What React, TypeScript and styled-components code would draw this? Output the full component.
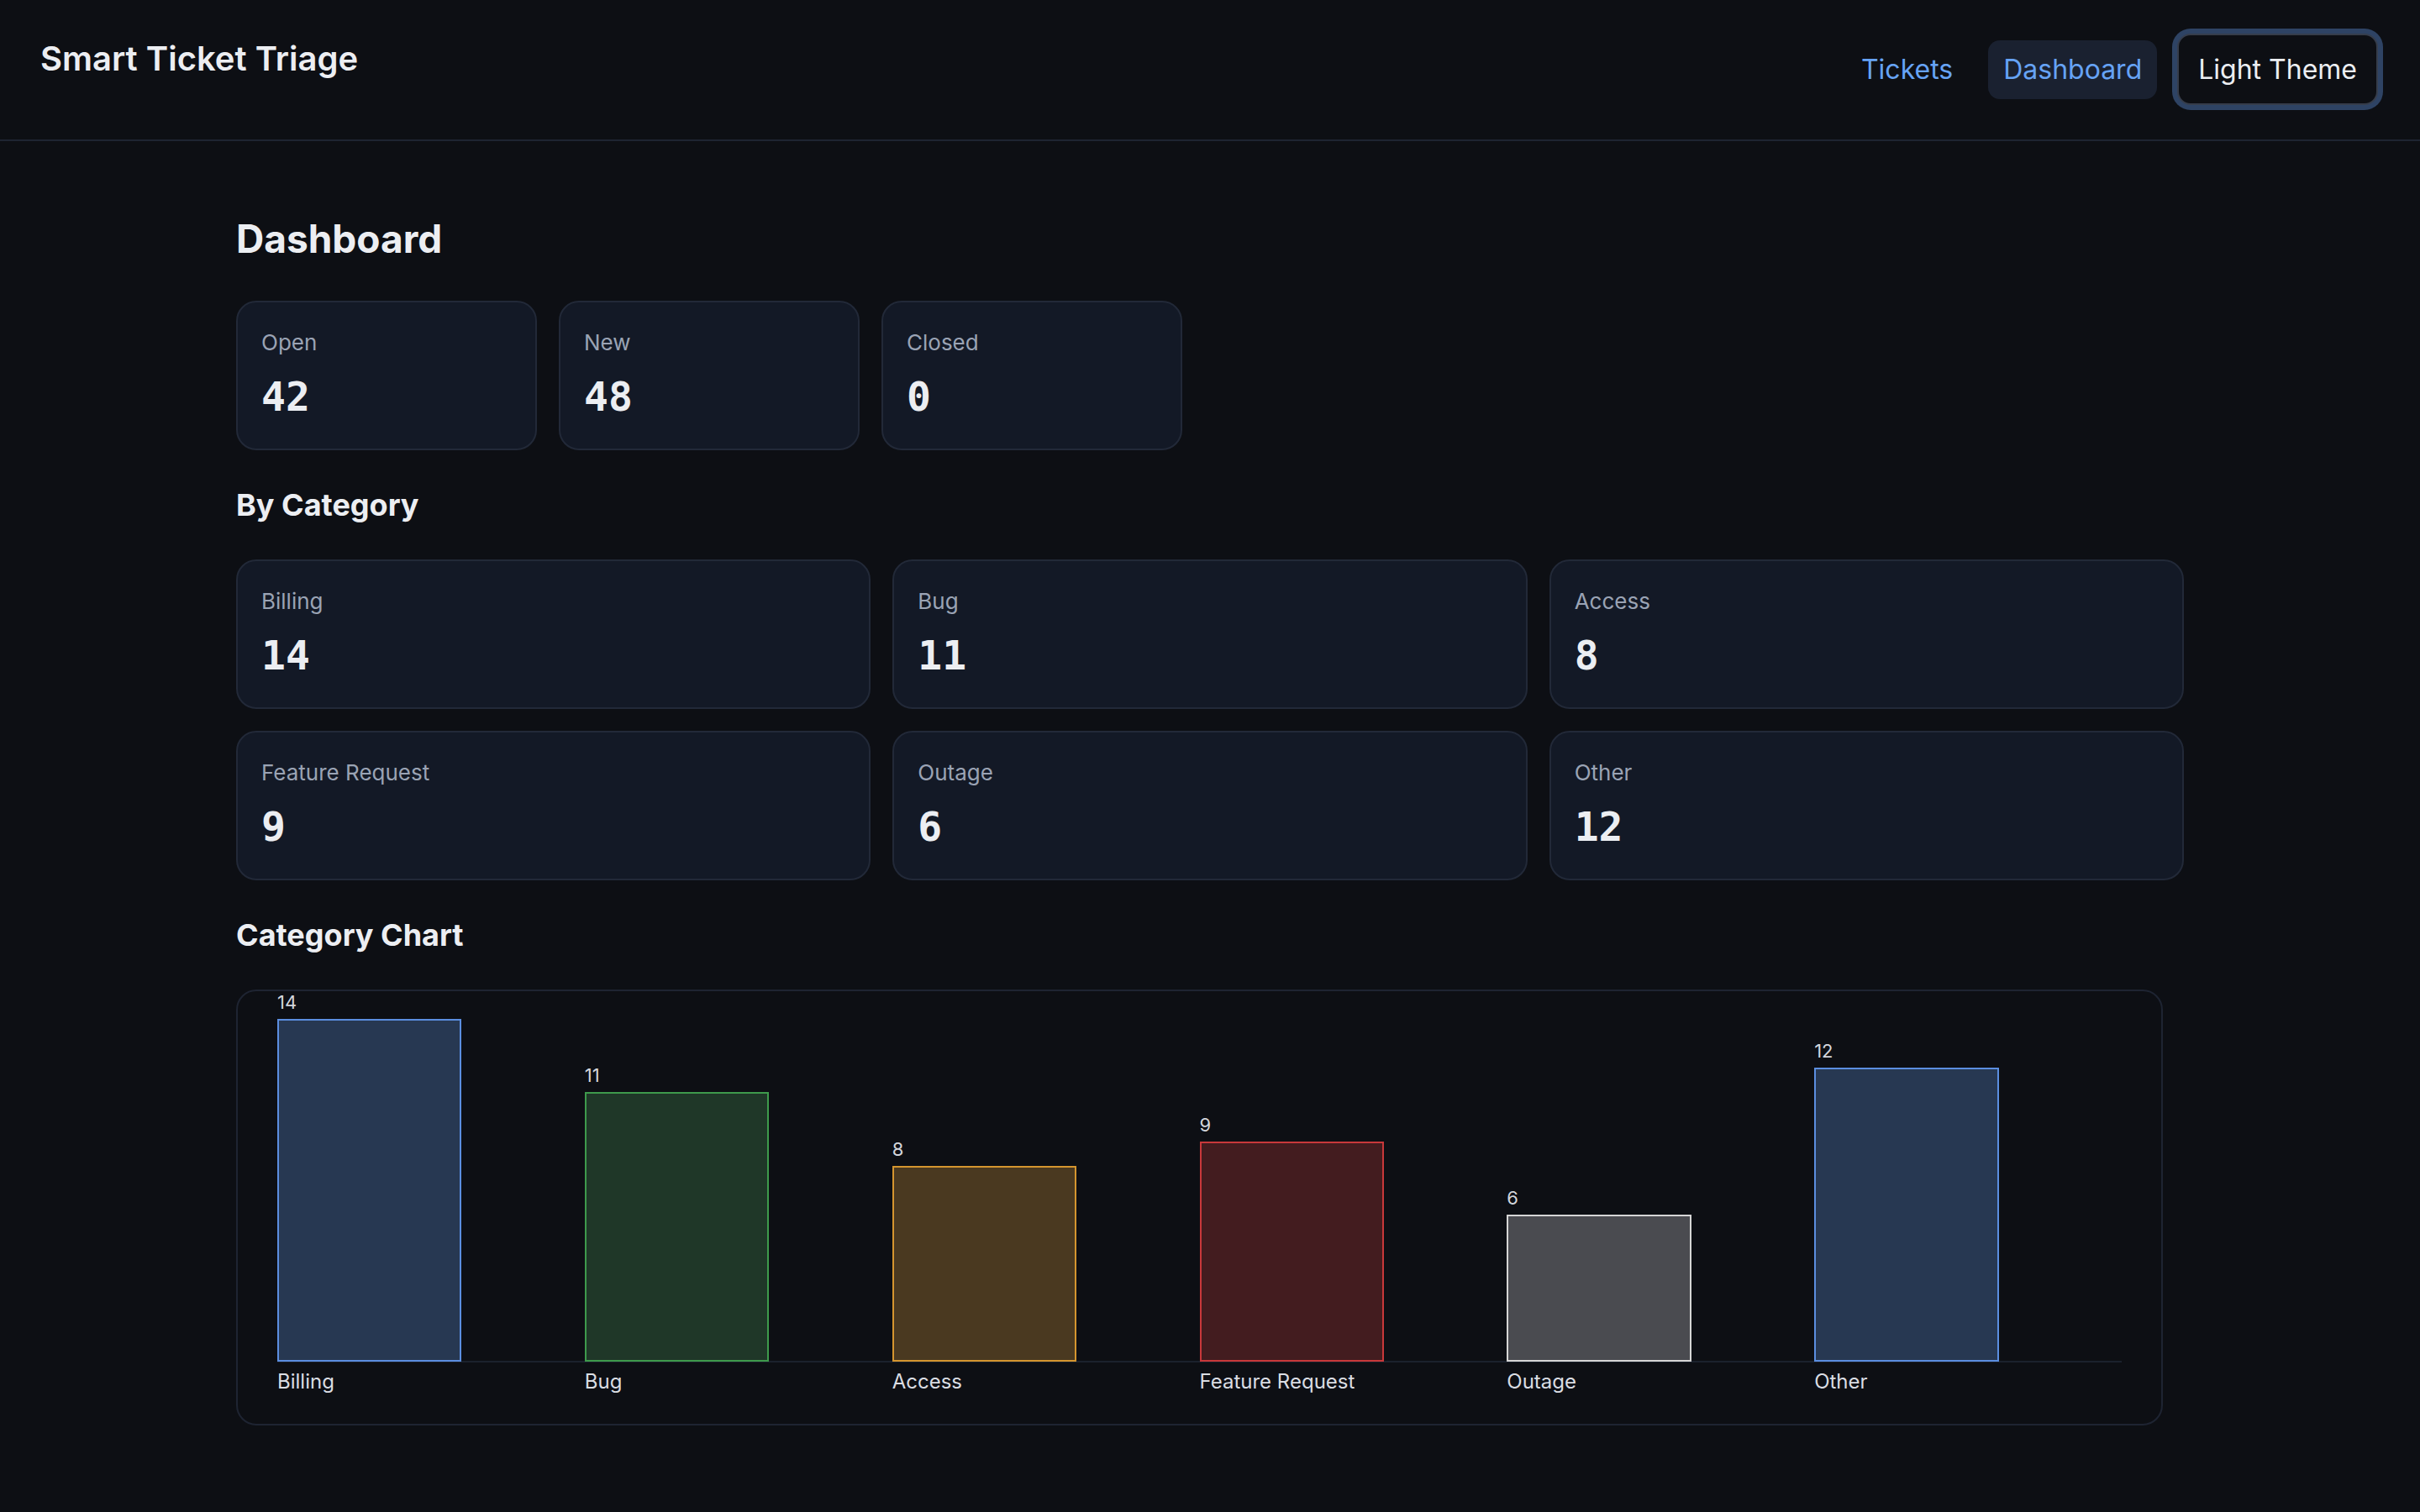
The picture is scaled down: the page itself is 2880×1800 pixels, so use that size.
import React from "react"
import styled, { createGlobalStyle } from "styled-components"

const GlobalStyle = createGlobalStyle`
  * {
    box-sizing: border-box;
  }
  body {
    margin: 0;
    background: #0d0f14;
    color: #e5e7eb;
    font-family: Inter, "Noto Sans", "Liberation Sans", sans-serif;
  }
`

const Header = styled.header`
  height: 168px;
  display: flex;
  justify-content: space-between;
  align-items: flex-start;
  padding: 40px 48px 0;
  border-bottom: 2px solid #1e2432;
`

const Brand = styled.h1`
  margin: 6px 0 0;
  font-size: 40px;
  line-height: 48px;
  font-weight: 600;
  color: #eceef2;
`

const Nav = styled.nav`
  display: flex;
  align-items: center;
  gap: 24px;
  height: 85px;
`

const NavLink = styled.a<{ $active?: boolean }>`
  display: block;
  padding: 16px 18px;
  font-size: 32px;
  line-height: 38px;
  color: #66a3f5;
  text-decoration: none;
  border-radius: 14px;
  background: ${(p) => (p.$active ? "#1a2130" : "transparent")};
`

const ThemeButton = styled.button`
  height: 85px;
  padding: 0 23px;
  font-family: inherit;
  font-size: 32px;
  color: #eceef2;
  background: #0d0f14;
  border: 2px solid #363d4b;
  border-radius: 16px;
  box-shadow: 0 0 0 6px #2e4364;
  margin-right: 2px;
`

const Main = styled.main`
  max-width: 2400px;
  margin: 0 auto;
  padding: 88px 41px 60px;
`

const PageTitle = styled.h2`
  margin: 0 0 46px;
  font-size: 46px;
  line-height: 56px;
  font-weight: 700;
  color: #eceef2;
`

const SectionTitle = styled.h3`
  margin: 43px 0;
  font-size: 36px;
  line-height: 44px;
  font-weight: 700;
  color: #eceef2;
`

const StatRow = styled.div`
  display: grid;
  grid-template-columns: repeat(3, 358px);
  gap: 26px;
`

const CategoryGrid = styled.div`
  display: grid;
  grid-template-columns: repeat(3, 1fr);
  gap: 26px;
`

const Card = styled.div`
  height: 178px;
  padding: 32px 28px 34px;
  background: #131926;
  border: 2px solid #222938;
  border-radius: 24px;
`

const CardLabel = styled.div`
  font-size: 26px;
  line-height: 32px;
  color: #9aa3b4;
`

const CardValue = styled.div`
  margin-top: 20px;
  font-family: "DejaVu Sans Mono", "Liberation Mono", monospace;
  font-weight: 700;
  font-size: 48px;
  line-height: 56px;
  color: #eceef2;
`

const ChartPanel = styled.div`
  margin-right: 25px;
  padding: 0 47px 36px;
  border: 2px solid #1e2432;
  border-radius: 24px;
`

const BarsRow = styled.div`
  display: grid;
  grid-template-columns: repeat(6, 1fr);
  align-items: end;
  height: 442px;
  border-bottom: 2px solid #1b212d;
`

const BarColumn = styled.div`
  display: flex;
  flex-direction: column;
  justify-content: flex-end;
`

const BarValue = styled.div`
  font-size: 22px;
  line-height: 27px;
  margin-bottom: 6px;
  color: #d3d6dc;
`

const Bar = styled.div<{ $fill: string; $stroke: string }>`
  width: 60%;
  background: ${(p) => p.$fill};
  border: 2px solid ${(p) => p.$stroke};
`

const LabelsRow = styled.div`
  display: grid;
  grid-template-columns: repeat(6, 1fr);
  margin-top: 8px;
`

const BarLabel = styled.div`
  font-size: 24px;
  line-height: 29px;
  color: #dadde3;
`

const statuses = [
  { label: "Open", value: 42 },
  { label: "New", value: 48 },
  { label: "Closed", value: 0 },
]

const palette = {
  blue: { fill: "#273852", stroke: "#5b8ee0" },
  green: { fill: "#1f3728", stroke: "#3e9a4c" },
  orange: { fill: "#4a3920", stroke: "#d4952f" },
  red: { fill: "#431c1f", stroke: "#c8383a" },
  gray: { fill: "#4a4b50", stroke: "#d6d6d6" },
}

const categories = [
  { label: "Billing", value: 14, color: palette.blue },
  { label: "Bug", value: 11, color: palette.green },
  { label: "Access", value: 8, color: palette.orange },
  { label: "Feature Request", value: 9, color: palette.red },
  { label: "Outage", value: 6, color: palette.gray },
  { label: "Other", value: 12, color: palette.blue },
]

const BAR_MAX = 408

export default function App() {
  const max = Math.max(...categories.map((c) => c.value))

  return (
    <>
      <GlobalStyle />
      <Header>
        <Brand>Smart Ticket Triage</Brand>
        <Nav>
          <NavLink href="#">Tickets</NavLink>
          <NavLink href="#" $active>
            Dashboard
          </NavLink>
          <ThemeButton>Light Theme</ThemeButton>
        </Nav>
      </Header>
      <Main>
        <PageTitle>Dashboard</PageTitle>
        <StatRow>
          {statuses.map((s) => (
            <Card key={s.label}>
              <CardLabel>{s.label}</CardLabel>
              <CardValue>{s.value}</CardValue>
            </Card>
          ))}
        </StatRow>

        <SectionTitle>By Category</SectionTitle>
        <CategoryGrid>
          {categories.map((c) => (
            <Card key={c.label}>
              <CardLabel>{c.label}</CardLabel>
              <CardValue>{c.value}</CardValue>
            </Card>
          ))}
        </CategoryGrid>

        <SectionTitle>Category Chart</SectionTitle>
        <ChartPanel>
          <BarsRow>
            {categories.map((c) => (
              <BarColumn key={c.label}>
                <BarValue>{c.value}</BarValue>
                <Bar
                  $fill={c.color.fill}
                  $stroke={c.color.stroke}
                  style={{ height: (c.value / max) * BAR_MAX }}
                />
              </BarColumn>
            ))}
          </BarsRow>
          <LabelsRow>
            {categories.map((c) => (
              <BarLabel key={c.label}>{c.label}</BarLabel>
            ))}
          </LabelsRow>
        </ChartPanel>
      </Main>
    </>
  )
}
